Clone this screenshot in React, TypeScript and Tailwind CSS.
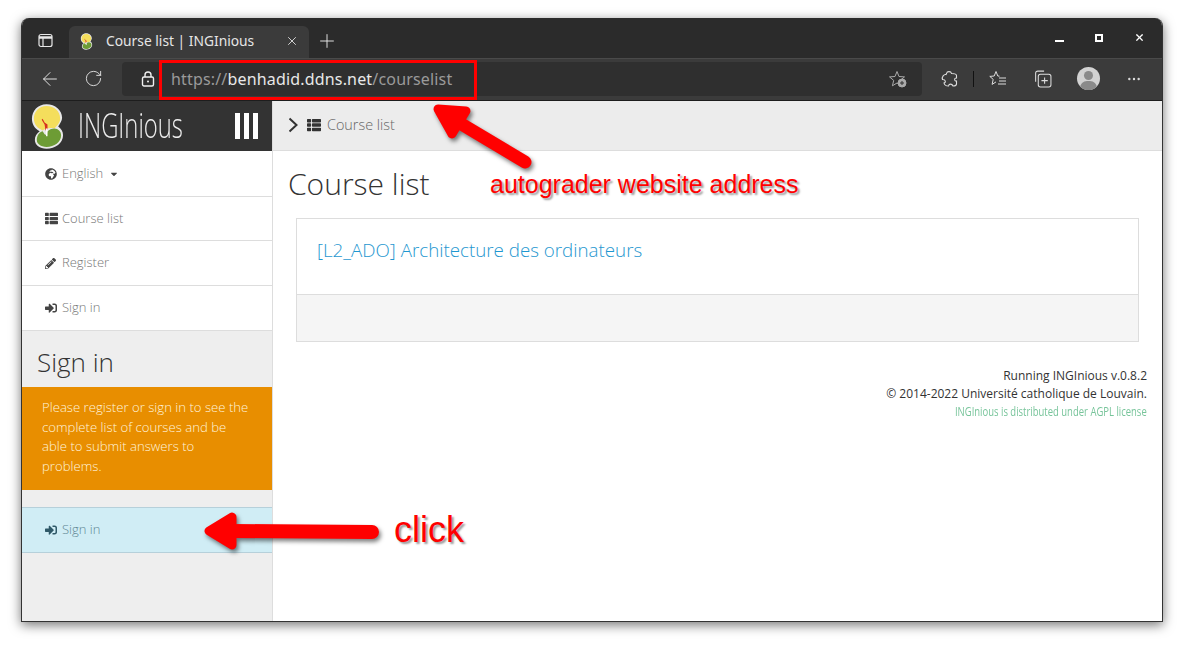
import React from 'react';
import { ArrowLeft, MoreHorizontal, Plus, RotateCw, X } from 'lucide-react';
import { FaCaretDown, FaGlobeAfrica, FaPencilAlt, FaSignInAlt, FaThList } from 'react-icons/fa';

const Logo = ({ className }: { className?: string }) => (
    <svg viewBox="0 0 36 48" className={className}>
        <path d="M17 1C8 1 2 8 2 16c0 6 3 10 8 13-3 2-5 5-5 9 0 5 5 9 12 9 9 0 17-6 17-14 0-4-2-7-5-9 2-3 4-6 4-9C33 7 26 1 17 1Z" fill="#e8e8e8" />
        <path d="M17 3C9 3 4 9 4 16c0 6 4 10 9 12 3-2 8-3 12-2 3-3 6-6 6-10C31 8 25 3 17 3Z" fill="#f4de5c" />
        <path d="M13 29c-4 1-6 5-6 9 0 4 4 7 10 7 8 0 15-5 15-12 0-4-3-7-7-7-3 0-5 1-7 3l-1 4-2-1Z" fill="#6d9c35" />
        <path d="M12 17l3 5 1 6 2-1 0-5-3-2-2-4Z" fill="#d6301f" />
        <rect x="16.500" y="26" width="1.500" height="8" fill="#fff" />
    </svg>
);

const SideItem = ({ icon, label, caret, height }: { icon: React.ReactNode; label: string; caret?: boolean; height: string }) => (
    <div className={`flex ${height} items-center border-b border-[#ddd] bg-white pl-[23px] text-[13px] font-light text-[#777]`}>
        <span className="flex w-[17px] text-[#444]">{icon}</span>
        <span>{label}</span>
        {caret && <FaCaretDown className="ml-[6px] text-[#444]" size={10} />}
    </div>
);

export default function App() {
    return (
        <div className="relative h-[646px] w-[1184px] overflow-hidden bg-white font-['Open_Sans',sans-serif]">
            <div className="ml-[21px] mt-[18px] h-[604px] w-[1142px] overflow-hidden rounded-t-lg border-x border-b border-[#333] shadow-[0_3px_12px_rgba(0,0,0,0.55)]">
                {/* Title bar */}
                <div className="flex h-[40px] items-end bg-[#2b2b2b]">
                    <div className="flex h-[32px] w-[47px] items-center justify-center pb-1">
                        <svg width="15" height="15" viewBox="0 0 15 15" fill="none" stroke="#e8e8e8" strokeWidth="1.2">
                            <rect x="1" y="1.5" width="13" height="12" rx="2" />
                            <path d="M1 4.5h13" strokeWidth="2.4" />
                            <path d="M5 4.5v9" />
                        </svg>
                    </div>
                    <div className="flex h-[32px] w-[240px] items-center rounded-t-md bg-[#3b3b3b] pb-[2px] pl-[11px] pr-[10px] text-[13.8px] text-[#e6e6e6]">
                        <Logo className="h-[17px] w-[13px]" />
                        <span className="ml-[13px] flex-1 font-['Noto_Sans',sans-serif]">Course list | INGInious</span>
                        <X size={14} strokeWidth={1.5} />
                    </div>
                    <div className="flex h-[32px] w-[35px] items-center justify-center pb-[2px] text-[#eee]">
                        <Plus size={22} strokeWidth={1} />
                    </div>
                    <div className="flex-1" />
                    <div className="flex h-[40px] w-[120px] items-center justify-between pb-[1px] pl-[13px] pr-[17px] text-white">
                        <span className="mt-[6px] h-[2px] w-[9px] bg-white" />
                        <span className="h-[8px] w-[8px] border-2 border-white" />
                        <X size={11} strokeWidth={2.6} />
                    </div>
                </div>
                {/* Toolbar */}
                <div className="flex h-[43px] items-center border-t border-b border-t-[#4a4a4a] border-b-[#1d1d1d] bg-[#3b3b3b] pb-[2px] text-[#ddd]">
                    <div className="flex w-[100px] shrink-0 items-center pl-[17px] text-[#f0f0f0]">
                        <ArrowLeft size={22} strokeWidth={1} />
                        <RotateCw size={19} strokeWidth={1.1} className="ml-[23px]" />
                    </div>
                    <div className="flex h-[34px] w-[800px] items-center rounded bg-[#2f2f2f] pl-[19px] pr-[15px] font-['Noto_Sans',sans-serif] text-[16px] tracking-[0.17px]">
                        <svg width="14" height="16" viewBox="0 0 14 16" fill="none" stroke="#f0f0f0" strokeWidth="1.4">
                            <rect x="1.500" y="6" width="11" height="9" rx="1.500" />
                            <path d="M4 6V4a3 3 0 0 1 6 0v2" />
                            <circle cx="7" cy="10.500" r="1" fill="#f0f0f0" stroke="none" />
                        </svg>
                        <span className="ml-[16px] flex-1 text-[#9a9a9a]">
                            https://<span className="text-[#e8e8e8]">benhadid.ddns.net</span>/courselist
                        </span>
                        <svg width="18" height="18" viewBox="0 0 18 18" fill="none" stroke="#aaa" strokeWidth="1">
                            <path d="M8 1.5l2 5 5.5.4-4.2 3.5 1.3 5.4L8 13l-4.6 2.8 1.3-5.4L.5 6.9 6 6.5Z" />
                            <circle cx="13" cy="13" r="4" fill="#aaa" />
                            <path d="M13 11v4M11 13h4" stroke="#333" />
                        </svg>
                    </div>
                    <div className="flex flex-1 items-center pl-[19px] text-[#ddd]">
                        <svg width="17" height="18" viewBox="0 0 17 18" fill="none" stroke="#ddd" strokeWidth="1.1">
                            <path d="M5.500 3.500C6 1 10 1 10.500 3.500c2 0 5 0 5 2v2.500c-2.500-.5-2.500 3.500 0 3v3c0 1.500-2 2-3.500 2-1-2.500-4-2.500-4.500 0-2 0-4-.5-4.500-3 2-.5 2-3.500-1.500-3.500-1-2.500 1.500-5.500 3.500-5Z" />
                        </svg>
                        <span className="ml-[15px] h-[16px] w-px bg-[#111]" />
                        <svg className="ml-[15px]" width="18" height="18" viewBox="0 0 18 18" fill="none" stroke="#ddd" strokeWidth="1">
                            <path d="M7 1.500l1.800 4.500 1.700.2M7 1.500L5.200 6 .8 6.400l3.400 3-1.100 5 3.900-2.500" />
                            <path d="M10 8h7M10 11h7M9 14h8" />
                        </svg>
                        <svg className="ml-[26px]" width="19" height="19" viewBox="0 0 18 18" fill="none" stroke="#ddd" strokeWidth="1">
                            <path d="M2.500 12V4a2 2 0 0 1 2-2h6" />
                            <rect x="5" y="5" width="12" height="12" rx="2" />
                            <path d="M11 8v6M8 11h6" />
                        </svg>
                        <span className="relative ml-[25px] h-[23px] w-[23px] overflow-hidden rounded-full bg-[#d2d2d2]">
                            <span className="absolute left-[7px] top-[4px] h-[9px] w-[9px] rounded-full bg-[#8a8a8a]" />
                            <span className="absolute left-[3px] top-[14px] h-[14px] w-[17px] rounded-full bg-[#8a8a8a]" />
                        </span>
                        <MoreHorizontal size={16} strokeWidth={1.6} className="ml-[26px]" />
                    </div>
                </div>
                {/* Page */}
                <div className="flex h-[520px]">
                    <aside className="flex w-[251px] shrink-0 flex-col border-r border-[#ddd] bg-[#eee]">
                        <div className="flex h-[50px] items-center bg-[#333] pl-[8px] pr-[14px] text-white">
                            <Logo className="h-[47px] w-[35px]" />
                            <span className="ml-[13px] flex-1 whitespace-nowrap pb-[3px] font-light text-[#eee]">
                                <span className="inline-block origin-left scale-x-[0.7] text-[34px] leading-[44px]">INGInious</span>
                            </span>
                            <span className="flex gap-[4px]">
                                <span className="h-[26px] w-[5px] bg-white" />
                                <span className="h-[26px] w-[5px] bg-white" />
                                <span className="h-[26px] w-[5px] bg-white" />
                            </span>
                        </div>
                        <SideItem height="h-[46px]" icon={<FaGlobeAfrica size={12} />} label="English" caret />
                        <SideItem height="h-[44px]" icon={<FaThList size={13} />} label="Course list" />
                        <SideItem height="h-[45px]" icon={<FaPencilAlt size={11} />} label="Register" />
                        <SideItem height="h-[45px]" icon={<FaSignInAlt size={12} />} label="Sign in" />
                        <h2 className="flex h-[56px] items-center pl-[15px] pt-[6px] text-[26px] font-light text-[#333]">Sign in</h2>
                        <div className="h-[103px] bg-[#e88e00] pb-[10px] pl-[20px] pr-[22px] pt-[11px] text-[13.15px] font-light leading-[19.5px] text-[#fff3dc]">
                            Please register or sign in to see the complete list of courses and be able to submit answers to problems.
                        </div>
                        <div className="mt-[17px] flex h-[46px] items-center border-y border-[#b6d0da] bg-[#d0edf5] pl-[23px] text-[13px] font-light text-[#5f8694]">
                            <span className="flex w-[17px] text-[#2f5968]"><FaSignInAlt size={12} /></span>
                            <span>Sign in</span>
                        </div>
                    </aside>
                    <main className="flex-1 bg-white">
                        <div className="flex h-[50px] items-center border-b border-[#ddd] bg-[#ececec] pb-[1px] pl-[15px] text-[14.4px] font-light text-[#666]">
                            <svg width="11" height="16" viewBox="0 0 11 16" fill="none" stroke="#333" strokeWidth="2">
                                <path d="M1.500 1.500L8.500 8L1.500 14.500" />
                            </svg>
                            <FaThList size={14} className="ml-[8px] text-[#333]" />
                            <span className="ml-[6px]">Course list</span>
                        </div>
                        <h1 className="ml-[15px] mt-[11px] text-[30px] font-light leading-[44px] text-[#333]">Course list</h1>
                        <div className="ml-[23px] mt-[12px] h-[124px] w-[843px] border border-[#ddd]">
                            <div className="h-[76px] border-b border-[#ddd] bg-white pl-[20px] pt-[18px] text-[18.75px] font-light leading-[26px] text-[#1f97d0]">
                                [L2_ADO] Architecture des ordinateurs
                            </div>
                            <div className="h-[46px] bg-[#f5f5f5]" />
                        </div>
                        <div className="mr-[15px] mt-[25px] text-right text-[12px] leading-[18px] text-[#333]">
                            <div>Running INGInious v.0.8.2</div>
                            <div>© 2014-2022 Université catholique de Louvain.</div>
                            <div className="whitespace-nowrap text-[#77c49a]">
                                <span className="inline-block origin-right scale-x-[0.79]">INGInious is distributed under AGPL license</span>
                            </div>
                        </div>
                    </main>
                </div>
            </div>

            {/* Annotations */}
            <div className="absolute left-[159px] top-[60px] h-[40px] w-[318px] border-[3px] border-[#f00]" />
            <svg className="pointer-events-none absolute left-0 top-0 drop-shadow-[2px_3px_2px_rgba(0,0,0,0.5)]" width="1184" height="646" viewBox="0 0 1184 646">
                <g fill="#f00" stroke="#f00" strokeLinejoin="round" strokeLinecap="round">
                    <path d="M438 109L466 111L452 134Z" strokeWidth="9" />
                    <path d="M458 122L525 162" strokeWidth="13" fill="none" />
                    <path d="M209 531L232 517L232 545Z" strokeWidth="9" />
                    <path d="M230 531L372 532" strokeWidth="14" fill="none" />
                </g>
            </svg>
            <div className="absolute left-[490px] top-[170px] whitespace-nowrap font-['Liberation_Sans',sans-serif] text-[25px] leading-[28px] text-[#f00] [text-shadow:2px_2px_2px_rgba(0,0,0,0.4)]">
                autograder website address
            </div>
            <div className="absolute left-[394px] top-[509px] font-['Liberation_Sans',sans-serif] text-[36px] leading-[42px] text-[#f00] [text-shadow:2px_2px_2px_rgba(0,0,0,0.4)]">
                click
            </div>
        </div>
    );
}
